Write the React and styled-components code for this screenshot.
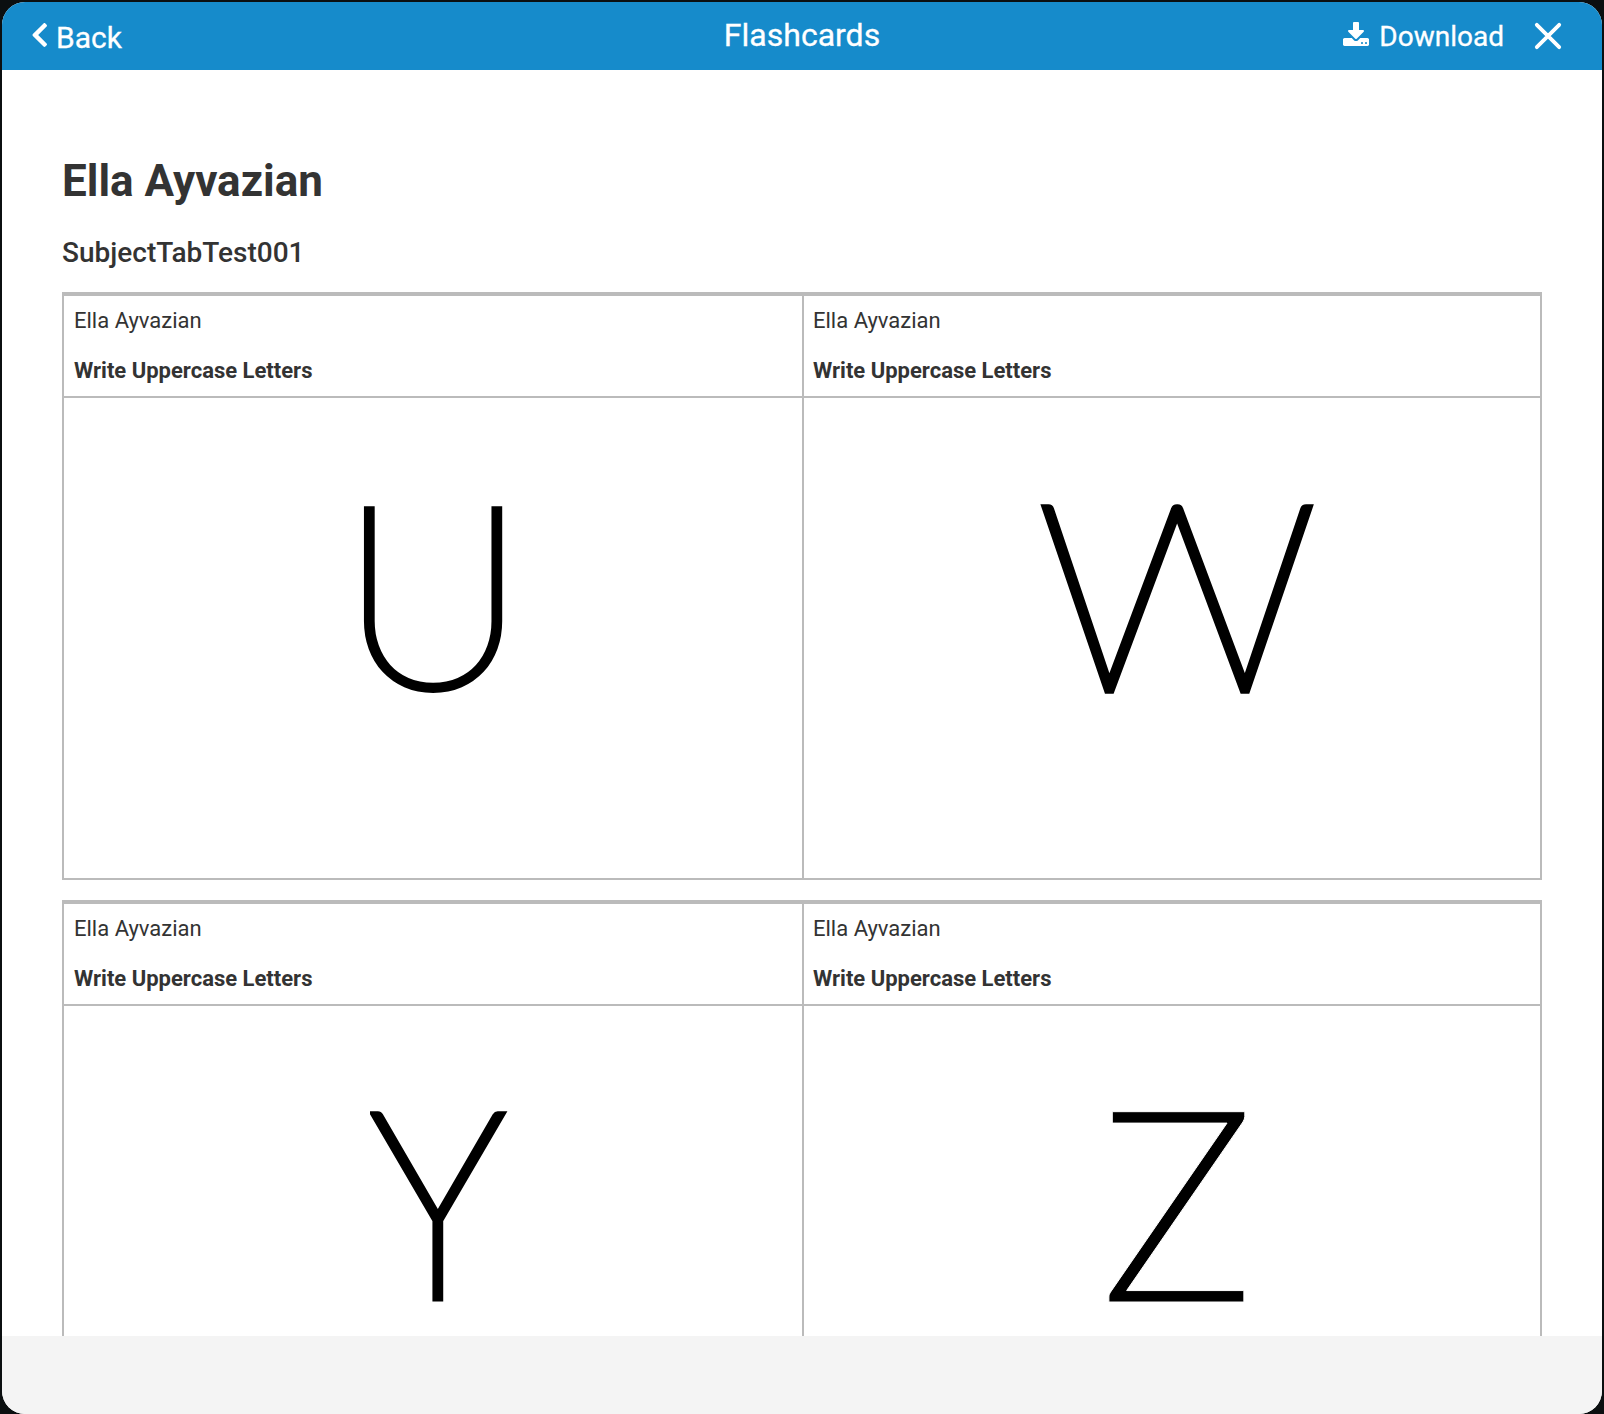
import React from 'react';
import styled, { createGlobalStyle } from 'styled-components';

const GlobalStyle = createGlobalStyle`
  *, *::before, *::after { box-sizing: border-box; }
  body {
    margin: 0;
    background: #0b0f10;
    font-family: Roboto, "Liberation Sans", sans-serif;
    color: #333;
  }
  h1, h2, p { margin: 0; }
`;

const Screen = styled.div`
  height: 1414px;
  padding: 2px 2px 0;
  overflow: hidden;
`;

const Modal = styled.div`
  display: flex;
  flex-direction: column;
  height: 1412px;
  background: #fff;
  border-radius: 23px;
  overflow: hidden;
`;

const Header = styled.header`
  display: grid;
  grid-template-columns: 1fr auto 1fr;
  flex: none;
  height: 68px;
  background: #168bcb;
  color: #fff;
  -webkit-text-stroke: 0.3px #fff;
`;

const HeaderAction = styled.button`
  display: flex;
  align-items: flex-start;
  height: 68px;
  padding: 0;
  border: 0;
  background: none;
  color: inherit;
  font: 400 ${(p) => p.$size}px/35px Roboto, "Liberation Sans", sans-serif;
  cursor: pointer;
`;

const BackButton = styled(HeaderAction)`
  gap: 8px;
  padding-left: 28.5px;

  svg { margin-top: 19px; }
  span { padding-top: 18px; }
`;

const Title = styled.div`
  padding-top: 14px;
  font-size: 32px;
  line-height: 38px;
`;

const Actions = styled.div`
  display: flex;
  justify-content: flex-end;
  gap: 30px;
  padding-right: 40px;
`;

const DownloadButton = styled(HeaderAction)`
  gap: 10px;

  svg { margin-top: 20px; }
  span { padding-top: 17px; }
`;

const CloseButton = styled(HeaderAction)`
  svg { margin-top: 20px; }
`;

const Body = styled.main`
  flex: 1;
  min-height: 0;
  padding: 85px 60px 0;
  overflow: hidden;
`;

const Student = styled.h1`
  font-size: 44px;
  font-weight: 700;
  line-height: 52px;
`;

const Subject = styled.h2`
  margin: 25px 0 19px;
  font-size: 28px;
  font-weight: 500;
  line-height: 41px;
`;

const CardRow = styled.section`
  display: grid;
  grid-template-columns: 742px 738px;
  height: 588px;
  margin-bottom: 20px;
  border-top: 4px solid #bbb;
  border-bottom: 2px solid #bbb;
`;

const Card = styled.article`
  display: flex;
  flex-direction: column;
  border: solid #bbb;
  border-width: 0 2px;

  & + & { border-left-width: 0; }
`;

const CardHeader = styled.div`
  flex: none;
  height: 102px;
  padding: 12px 10px 0;
  border-bottom: 2px solid #bbb;
  font-size: 22px;
  line-height: 26px;

  ${Card} + ${Card} & { padding-left: 9px; }
`;

const CardSkill = styled.p`
  margin-top: 24px;
  font-weight: 700;
`;

const Face = styled.div`
  display: flex;
  justify-content: center;
  flex: 1;
  min-height: 0;
  padding-top: ${(p) => p.$top}px;
  padding-left: ${(p) => p.$shift * 2}px;
`;

const Letter = styled.span`
  height: 235px;
  color: #000;
  font-family: Lato, Roboto, sans-serif;
  font-size: ${(p) => p.$size}px;
  font-weight: ${(p) => p.$weight};
  line-height: 1;
  transform: scaleX(${(p) => p.$stretch});
  -webkit-text-stroke: ${(p) => p.$outline};
`;

const Footer = styled.footer`
  flex: none;
  height: 78px;
  background: #f4f4f4;
`;

const ChevronLeft = () => (
  <svg width="17.5" height="28" viewBox="0 0 320 512" fill="currentColor">
    <path d="M34.52 239.03L228.87 44.69c9.37-9.37 24.57-9.37 33.94 0l22.67 22.67c9.36 9.36 9.37 24.52.04 33.9L131.49 256l154.02 154.75c9.34 9.38 9.32 24.54-.04 33.9l-22.67 22.67c-9.37 9.37-24.57 9.37-33.94 0L34.52 272.97c-9.37-9.37-9.37-24.57 0-33.94z" />
  </svg>
);

const DownloadIcon = () => (
  <svg width="26" height="24" viewBox="0 0 1664 1536" fill="currentColor">
    <path d="M1280 1344q0-26-19-45t-45-19-45 19-19 45 19 45 45 19 45-19 19-45zm256 0q0-26-19-45t-45-19-45 19-19 45 19 45 45 19 45-19 19-45zm128-224v320q0 40-28 68t-68 28h-1472q-40 0-68-28t-28-68v-320q0-40 28-68t68-28h465l135 136q58 56 136 56t136-56l136-136h464q40 0 68 28t28 68zm-325-569q17 41-14 70l-448 448q-18 19-45 19t-45-19l-448-448q-31-29-14-70 17-39 59-39h256v-448q0-26 19-45t45-19h256q26 0 45 19t19 45v448h256q42 0 59 39z" />
  </svg>
);

const CloseIcon = () => (
  <svg width="28" height="28" viewBox="0 0 28 28" fill="none" stroke="currentColor" strokeWidth="3.8" strokeLinecap="round">
    <path d="M2.8 2.8 25.2 25.2M25.2 2.8 2.8 25.2" />
  </svg>
);

const rows = [
  [
    { letter: 'U', size: 253, weight: 200, stretch: 1.02, top: 65, shift: 0, outline: '7.5px #000' },
    { letter: 'W', size: 260, weight: 200, stretch: 1.075, top: 61, shift: 5.5, outline: '7.5px #000' },
  ],
  [
    { letter: 'Y', size: 259, weight: 200, stretch: 0.9, top: 61, shift: 5, outline: '8.9px #000' },
    { letter: 'Z', size: 269, weight: 300, stretch: 0.963, top: 57, shift: 5.3, outline: '1px #fff' },
  ],
];

export default function App() {
  return (
    <>
      <GlobalStyle />
      <Screen>
        <Modal>
          <Header>
            <BackButton $size={30}>
              <ChevronLeft />
              <span>Back</span>
            </BackButton>
            <Title>Flashcards</Title>
            <Actions>
              <DownloadButton $size={28}>
                <DownloadIcon />
                <span>Download</span>
              </DownloadButton>
              <CloseButton $size={28} aria-label="Close">
                <CloseIcon />
              </CloseButton>
            </Actions>
          </Header>
          <Body>
            <Student>Ella Ayvazian</Student>
            <Subject>SubjectTabTest001</Subject>
            {rows.map((cards) => (
              <CardRow key={cards[0].letter}>
                {cards.map((card) => (
                  <Card key={card.letter}>
                    <CardHeader>
                      <p>Ella Ayvazian</p>
                      <CardSkill>Write Uppercase Letters</CardSkill>
                    </CardHeader>
                    <Face $top={card.top} $shift={card.shift}>
                      <Letter $size={card.size} $weight={card.weight} $stretch={card.stretch} $outline={card.outline}>
                        {card.letter}
                      </Letter>
                    </Face>
                  </Card>
                ))}
              </CardRow>
            ))}
          </Body>
          <Footer />
        </Modal>
      </Screen>
    </>
  );
}
